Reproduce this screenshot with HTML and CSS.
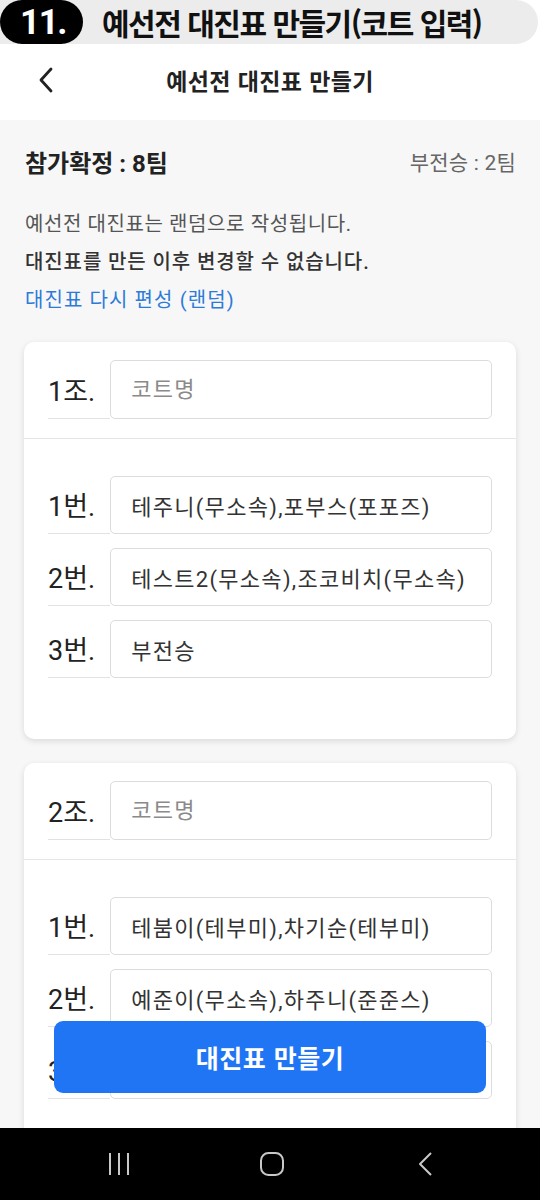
FILE: index.html
```html
<!DOCTYPE html>
<html lang="ko">
<head>
<meta charset="utf-8">
<title>예선전 대진표 만들기</title>
<link rel="stylesheet" href="styles.css">
</head>
<body>
<div class="screen">
  <div class="banner">
    <div class="banner-pill">
      <span class="step">11.</span>
      <span class="banner-title">예선전 대진표 만들기(코트 입력)</span>
    </div>
  </div>

  <header class="appbar">
    <svg class="back" width="16" height="26" viewBox="0 0 16 26" aria-hidden="true">
      <path d="M13 2 L3 13 L13 24" fill="none" stroke="#222" stroke-width="2.8" stroke-linecap="round" stroke-linejoin="round"/>
    </svg>
    <h1 class="appbar-title">예선전 대진표 만들기</h1>
  </header>

  <main class="content">
    <div class="summary">
      <span class="summary-main">참가확정 : 8팀</span>
      <span class="summary-sub">부전승 : 2팀</span>
    </div>

    <div class="notes">
      <p class="note">예선전 대진표는 랜덤으로 작성됩니다.</p>
      <p class="note note-strong">대진표를 만든 이후 변경할 수 없습니다.</p>
      <p class="note note-link">대진표 다시 편성 (랜덤)</p>
    </div>

    <section class="card">
      <div class="card-head">
        <div class="row">
          <span class="label">1조.</span>
          <input class="field" type="text" placeholder="코트명">
        </div>
      </div>
      <div class="card-body">
        <div class="row">
          <span class="label">1번.</span>
          <input class="field" type="text" value="테주니(무소속),포부스(포포즈)" readonly>
        </div>
        <div class="row">
          <span class="label">2번.</span>
          <input class="field" type="text" value="테스트2(무소속),조코비치(무소속)" readonly>
        </div>
        <div class="row">
          <span class="label">3번.</span>
          <input class="field" type="text" value="부전승" readonly>
        </div>
      </div>
    </section>

    <section class="card">
      <div class="card-head">
        <div class="row">
          <span class="label">2조.</span>
          <input class="field" type="text" placeholder="코트명">
        </div>
      </div>
      <div class="card-body">
        <div class="row">
          <span class="label">1번.</span>
          <input class="field" type="text" value="테붐이(테부미),차기순(테부미)" readonly>
        </div>
        <div class="row">
          <span class="label">2번.</span>
          <input class="field" type="text" value="예준이(무소속),하주니(준준스)" readonly>
        </div>
        <div class="row">
          <span class="label">3번.</span>
          <input class="field" type="text" value="부전승" readonly>
        </div>
      </div>
    </section>

    <button class="cta" type="button">대진표 만들기</button>
  </main>

  <nav class="sysnav">
    <svg width="24" height="26" viewBox="0 0 24 26" aria-hidden="true">
      <path d="M3 2 V24 M12 2 V24 M21 2 V24" stroke="#c8c8c8" stroke-width="2" fill="none"/>
    </svg>
    <svg width="26" height="26" viewBox="0 0 26 26" aria-hidden="true">
      <rect x="2" y="2" width="22" height="22" rx="7.5" fill="none" stroke="#c8c8c8" stroke-width="2"/>
    </svg>
    <svg width="16" height="26" viewBox="0 0 16 26" aria-hidden="true">
      <path d="M14 2 L3 13 L14 24" fill="none" stroke="#c8c8c8" stroke-width="2" stroke-linejoin="round"/>
    </svg>
  </nav>
</div>
</body>
</html>
```

FILE: styles.css
```css
* { box-sizing: border-box; }

html, body {
  margin: 0;
  padding: 0;
  background: #ffffff;
}

body {
  font-family: "Roboto", "Noto Sans CJK KR", sans-serif;
  color: #222;
}

.screen {
  width: 540px;
  height: 1200px;
  display: flex;
  flex-direction: column;
  overflow: hidden;
}

/* top banner */
.banner {
  height: 44px;
  flex: none;
  background: #fff;
}

.banner-pill {
  height: 44px;
  width: 538px;
  background: #ececec;
  border-radius: 0 22px 22px 0;
  display: flex;
  align-items: center;
}

.step {
  width: 83px;
  height: 44px;
  flex: none;
  background: #000;
  color: #fff;
  border-radius: 22px;
  display: flex;
  align-items: center;
  justify-content: center;
  padding-left: 3px;
  font-family: "Roboto", sans-serif;
  font-weight: 700;
  font-size: 35px;
  letter-spacing: -1.5px;
}

.banner-title {
  margin-left: 19px;
  font-family: "Noto Sans CJK KR", sans-serif;
  font-weight: 700;
  font-size: 30px;
  letter-spacing: -1.5px;
  color: #111;
  white-space: nowrap;
}

/* app bar */
.appbar {
  height: 76px;
  flex: none;
  position: relative;
  display: flex;
  align-items: center;
  justify-content: center;
  background: #fff;
}

.back {
  position: absolute;
  left: 38px;
  top: 23px;
}

.appbar-title {
  margin: 0 0 4px 0;
  font-family: "Noto Sans CJK KR", sans-serif;
  font-size: 23px;
  font-weight: 700;
  letter-spacing: 0.4px;
  color: #222;
}

/* content */
.content {
  flex: 1;
  position: relative;
  background: #f7f7f7;
  padding: 26px 24px 0 24px;
  overflow: hidden;
}

.summary {
  display: flex;
  justify-content: space-between;
  align-items: center;
  height: 30px;
  padding-left: 1px;
}

.summary-main {
  font-size: 24px;
  font-weight: 700;
  color: #222;
}

.summary-sub {
  font-size: 21px;
  letter-spacing: 0.2px;
  color: #666;
}

.notes {
  margin-top: 29px;
  padding-left: 1px;
}

.note {
  margin: 0;
  font-size: 20px;
  line-height: 38px;
  letter-spacing: 0.6px;
  color: #555;
}

.note-strong {
  color: #333;
  font-weight: 500;
  letter-spacing: 0.9px;
}

.note-link {
  color: #2d7bd8;
  letter-spacing: 1.1px;
}

.card {
  margin-top: 23px;
  background: #fff;
  border-radius: 10px;
  box-shadow: 0 2px 6px rgba(0, 0, 0, 0.12);
}

.card + .card {
  margin-top: 24px;
}

.card-head {
  padding: 18px 24px 19px 24px;
}

.card-body {
  border-top: 1px solid #e6e6e6;
  padding: 37px 24px 61px 24px;
  display: flex;
  flex-direction: column;
  gap: 14px;
}

.row {
  display: flex;
  align-items: stretch;
  height: 58px;
}

.card-head .row {
  height: 59px;
}

.label {
  flex: none;
  display: flex;
  align-items: center;
  padding-right: 15px;
  border-bottom: 1px solid #e2e2e2;
  font-size: 27px;
  letter-spacing: 0;
  color: #222;
}

.field {
  flex: 1;
  min-width: 0;
  height: 100%;
  border: 1px solid #dcdcdc;
  border-radius: 5px;
  background: #fff;
  padding: 0 0 0 20px;
  font-family: "Roboto", "Noto Sans CJK KR", sans-serif;
  font-size: 22px;
  color: #333;
  letter-spacing: 1.3px;
  outline: none;
}

.field::placeholder {
  color: #8a8a8a;
}

.cta {
  position: absolute;
  left: 54px;
  top: 901px;
  width: 432px;
  height: 72px;
  border: none;
  border-radius: 9px;
  background: #2075f5;
  color: #fff;
  font-family: "Noto Sans CJK KR", sans-serif;
  font-size: 25px;
  font-weight: 700;
  letter-spacing: 0.5px;
}

/* system nav */
.sysnav {
  height: 72px;
  flex: none;
  background: #000;
  display: flex;
  align-items: center;
  padding-left: 107px;
}

.sysnav svg:nth-child(1) { margin-right: 128px; }
.sysnav svg:nth-child(2) { margin-right: 132px; }
```
